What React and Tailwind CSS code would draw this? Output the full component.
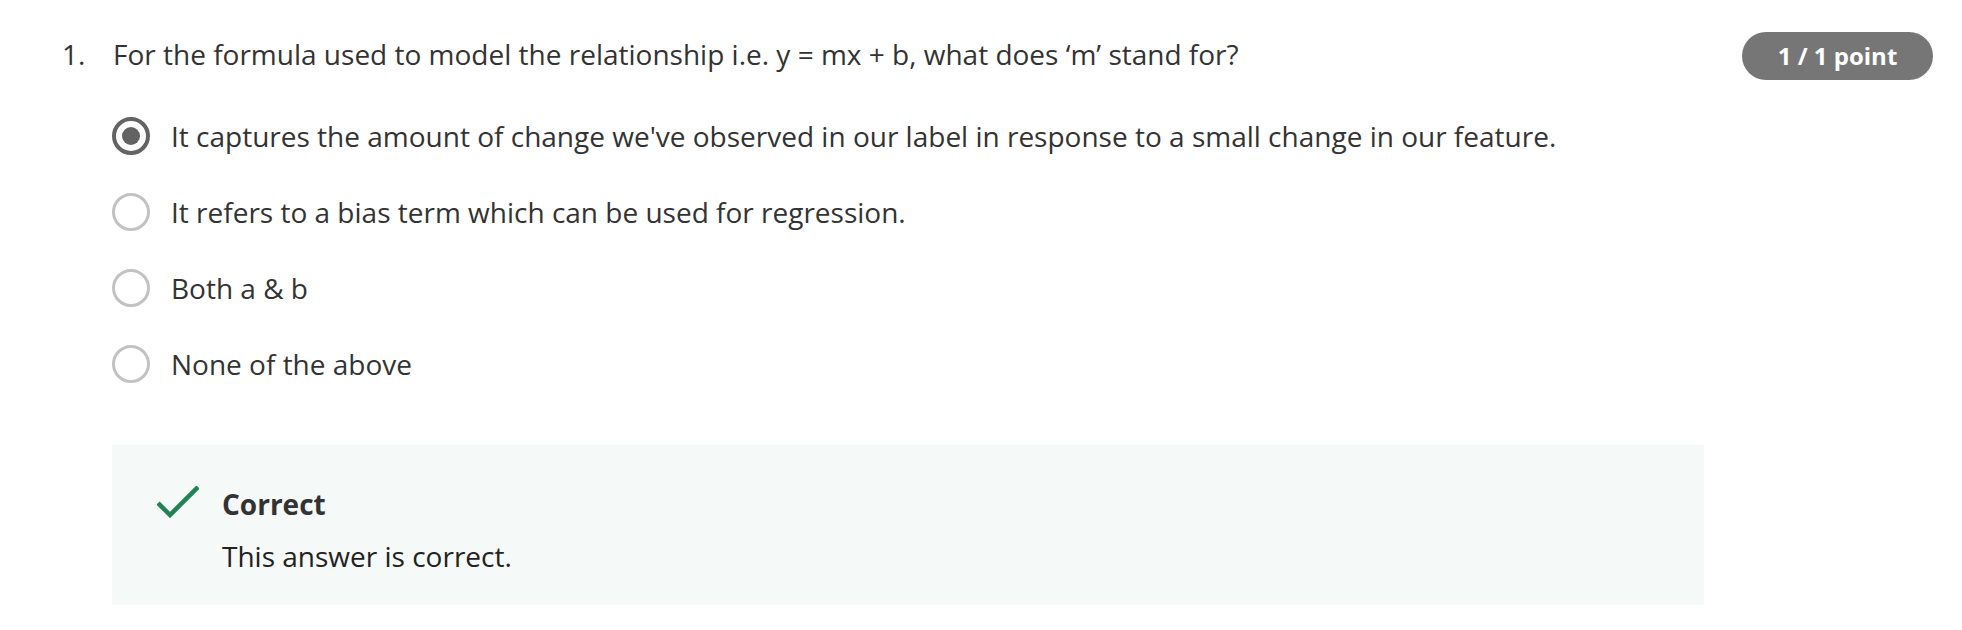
import React from "react";

const options = [
  { text: "It captures the amount of change we've observed in our label in response to a small change in our feature.", selected: true },
  { text: "It refers to a bias term which can be used for regression.", selected: false },
  { text: "Both a & b", selected: false },
  { text: "None of the above", selected: false },
];

function Radio({ selected }) {
  if (selected) {
    return (
      <span className="flex h-[38px] w-[38px] shrink-0 items-center justify-center rounded-full border-[4px] border-[#636363]">
        <span className="h-[18px] w-[18px] rounded-full bg-[#636363]" />
      </span>
    );
  }
  return <span className="h-[38px] w-[38px] shrink-0 rounded-full border-[3px] border-[#c2c2c2]" />;
}

export default function App() {
  return (
    <div className="min-h-[630px] w-[1962px] bg-white text-[#333333]" style={{ fontFamily: '"Open Sans", "Noto Sans", sans-serif' }}>
      <div className="flex items-start justify-between pl-[62px] pr-[29px] pt-[30px]">
        <div className="flex-1">
          <div className="flex items-center text-[28px] leading-[48px]">
            <span className="w-[51px]">1.</span>
            <span>For the formula used to model the relationship i.e. y = mx + b, what does ‘m’ stand for?</span>
          </div>
          <div className="mt-[39px] flex flex-col gap-[38px] pl-[50px]">
            {options.map((o, i) => (
              <label key={i} className="flex items-center gap-[21px] text-[28px] leading-[38px]">
                <Radio selected={o.selected} />
                <span>{o.text}</span>
              </label>
            ))}
          </div>
          <div className="ml-[50px] mt-[62px] flex h-[160px] w-[1592px] items-start gap-[23px] bg-[#f5f9f8] pl-[45px] pt-[43px]">
            <svg width="42" height="32" viewBox="0 0 42 32" className="-mt-[2px] shrink-0">
              <path d="M1 17 L13 29 L41 1" fill="none" stroke="#1f8354" strokeWidth="4.5" />
            </svg>
            <div>
              <div className="text-[28px] font-bold leading-[32px] text-[#333333]">Correct</div>
              <div className="mt-[20px] text-[28px] leading-[32px] text-[#222222]">This answer is correct.</div>
            </div>
          </div>
        </div>
        <div className="mt-[2px] flex h-[48px] w-[191px] items-center justify-center rounded-full bg-[#767676] text-[24px] font-bold text-white">
          1 / 1 point
        </div>
      </div>
    </div>
  );
}
